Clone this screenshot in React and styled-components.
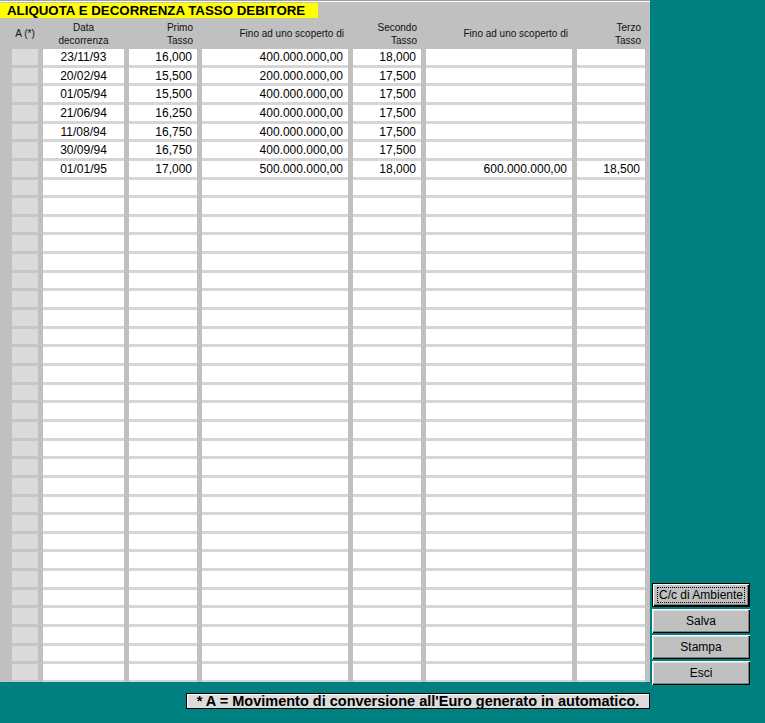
import React from 'react';
import styled, { createGlobalStyle } from 'styled-components';

const GlobalStyle = createGlobalStyle`
    html, body {
        margin: 0;
        padding: 0;
        background: #008080;
    }
    body {
        font-family: "Liberation Sans", Arial, sans-serif;
        color: #000;
    }
`;

const Screen = styled.div`
    width: 765px;
    height: 723px;
    display: grid;
    grid-template-columns: 650px 1fr;
    grid-template-rows: 682px 1fr;
    background: #008080;
    overflow: hidden;
`;

const Panel = styled.section`
    grid-column: 1;
    grid-row: 1;
    background: #c0c0c0;
    border-top: 1px solid #a0a0a0;
    box-shadow: inset 0 1px 0 #ffffff;
    box-sizing: border-box;
    padding-top: 2px;
    display: flex;
    flex-direction: column;
    overflow: hidden;
`;

const Title = styled.h1`
    margin: 0;
    width: 318px;
    height: 15px;
    box-sizing: border-box;
    padding-left: 7px;
    background: #ffff00;
    font-size: 13.3px;
    line-height: 15px;
    font-weight: bold;
    white-space: nowrap;
`;

const columns = '26px 81px 68px 146px 68px 146px 68px';

const Header = styled.div`
    display: grid;
    grid-template-columns: ${columns};
    column-gap: 5px;
    padding-left: 12px;
    height: 31px;
    flex-shrink: 0;
    align-items: center;
    font-size: 10px;
    line-height: 13px;
    color: #111;
`;

const Label = styled.div`
    text-align: ${p => p.$align || 'right'};
    padding-right: ${p => (p.$align === 'center' ? '0' : '4px')};
    white-space: nowrap;
`;

const Body = styled.div`
    display: grid;
    grid-template-columns: ${columns};
    grid-template-rows: repeat(34, 1fr);
    column-gap: 5px;
    padding-left: 12px;
    height: 634px;
    flex-shrink: 0;
`;

const Cell = styled.div`
    background: ${p => (p.$selector ? '#dadada' : '#ffffff')};
    border-bottom: 3px solid ${p => (p.$selector ? '#c6c6c6' : '#d6d6d6')};
    box-sizing: border-box;
    font-size: 12px;
    line-height: 16px;
    text-align: ${p => p.$align || 'right'};
    padding: 0 5px;
    white-space: nowrap;
    overflow: hidden;
`;

const Side = styled.aside`
    grid-column: 2;
    grid-row: 1 / span 2;
    display: flex;
    flex-direction: column;
    gap: 2px;
    padding: 583px 0 0 2px;
`;

const Button = styled.button`
    width: 98px;
    height: 24px;
    box-sizing: border-box;
    background: #c0c0c0;
    font-family: "Liberation Sans", Arial, sans-serif;
    font-size: 12px;
    color: #000;
    padding: 0;
    border: ${p => (p.$default ? '1px solid #000' : 'none')};
    box-shadow: ${p =>
        p.$default
            ? 'inset 1px 1px 0 #fff, inset -1px -1px 0 #000, inset -2px -2px 0 #808080'
            : 'inset 1px 1px 0 #fff, inset -1px -1px 0 #000, inset -2px -2px 0 #808080, inset 2px 2px 0 #dfdfdf'};
    display: flex;
    align-items: center;
    justify-content: center;
`;

const Focus = styled.span`
    border: 1px dotted #000;
    padding: 0 1px;
    line-height: 14px;
`;

const Footer = styled.footer`
    grid-column: 1;
    grid-row: 2;
    display: flex;
    justify-content: flex-end;
    padding-top: 11px;
`;

const Note = styled.div`
    width: 464px;
    height: 16px;
    box-sizing: border-box;
    background: #dcdcdc;
    border: 1px solid #000;
    box-shadow: inset 1px 1px 0 #fff;
    font-size: 14.5px;
    font-weight: bold;
    line-height: 14px;
    text-align: center;
    white-space: nowrap;
`;

const rows = [
    ['23/11/93', '16,000', '400.000.000,00', '18,000', '', ''],
    ['20/02/94', '15,500', '200.000.000,00', '17,500', '', ''],
    ['01/05/94', '15,500', '400.000.000,00', '17,500', '', ''],
    ['21/06/94', '16,250', '400.000.000,00', '17,500', '', ''],
    ['11/08/94', '16,750', '400.000.000,00', '17,500', '', ''],
    ['30/09/94', '16,750', '400.000.000,00', '17,500', '', ''],
    ['01/01/95', '17,000', '500.000.000,00', '18,000', '600.000.000,00', '18,500'],
];

while (rows.length < 34) rows.push(['', '', '', '', '', '']);

function App() {
    return (
        <>
            <GlobalStyle />
            <Screen>
                <Panel>
                    <Title>ALIQUOTA E DECORRENZA TASSO DEBITORE</Title>
                    <Header>
                        <Label $align="center">A (*)</Label>
                        <Label $align="center">Data<br />decorrenza</Label>
                        <Label>Primo<br />Tasso</Label>
                        <Label>Fino ad uno scoperto di</Label>
                        <Label>Secondo<br />Tasso</Label>
                        <Label>Fino ad uno scoperto di</Label>
                        <Label>Terzo<br />Tasso</Label>
                    </Header>
                    <Body>
                        {rows.map((r, i) => (
                            <React.Fragment key={i}>
                                <Cell $selector />
                                <Cell $align="center">{r[0]}</Cell>
                                <Cell>{r[1]}</Cell>
                                <Cell>{r[2]}</Cell>
                                <Cell>{r[3]}</Cell>
                                <Cell>{r[4]}</Cell>
                                <Cell>{r[5]}</Cell>
                            </React.Fragment>
                        ))}
                    </Body>
                </Panel>
                <Side>
                    <Button $default><Focus>C/c di Ambiente</Focus></Button>
                    <Button>Salva</Button>
                    <Button>Stampa</Button>
                    <Button>Esci</Button>
                </Side>
                <Footer>
                    <Note>* A = Movimento di conversione all'Euro generato in automatico.</Note>
                </Footer>
            </Screen>
        </>
    );
}

export default App;
